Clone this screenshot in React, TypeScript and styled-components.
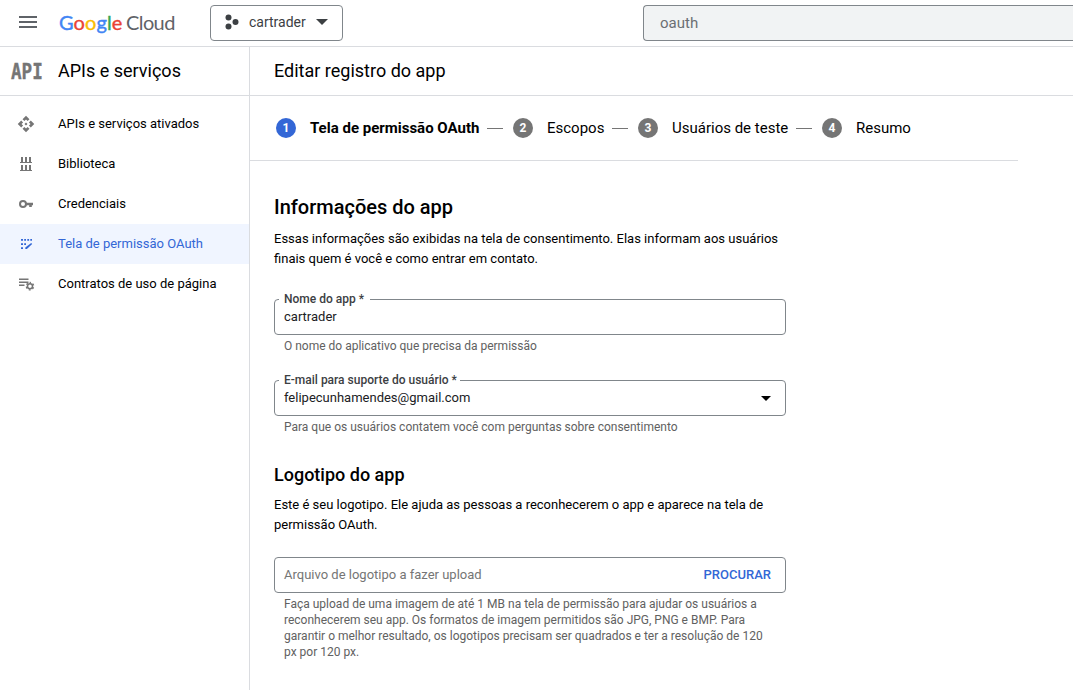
import React from "react";
import styled, { createGlobalStyle } from "styled-components";

const Global = createGlobalStyle`
  * { box-sizing: border-box; }
  html, body { margin: 0; background: #fff; }
  body { font-family: Roboto, "Liberation Sans", sans-serif; font-size: 13px; line-height: 20px; color: #000; overflow: hidden; }
  h1, h2, h3, p { margin: 0; font-weight: 400; }
  button { font-family: inherit; }
`;

const Page = styled.div`
  display: flex;
  flex-direction: column;
  height: 690px;
  overflow: hidden;
`;

const TopBar = styled.header`
  flex: none;
  display: flex;
  align-items: flex-start;
  height: 47px;
  padding: 5px 0 0 19px;
  border-bottom: 1px solid #dadce0;
`;

const MenuButton = styled.button`
  display: flex;
  margin: 11px 22px 0 0;
  padding: 0;
  border: 0;
  background: none;
`;

const Logo = styled.div`
  display: flex;
  width: 151px;
  margin-top: 5px;
  font: 400 20px/24px Lato, sans-serif;
  color: #5f6368;
  white-space: nowrap;
`;

const Wordmark = styled.span`
  width: 67px;
  letter-spacing: 0.1px;
  -webkit-text-stroke: 0.4px;
`;

const Letter = styled.span<{ $color: string }>`
  color: ${(p) => p.$color};
`;

const Product = styled.span`
  letter-spacing: -0.6px;
`;

const ProjectPicker = styled.button`
  display: flex;
  align-items: center;
  width: 133px;
  height: 36px;
  padding: 0 14px 2px 14px;
  border: 1px solid #80868b;
  border-radius: 4px;
  background: #fff;
  color: #3c4043;
  font-size: 14px;
`;

const ProjectName = styled.span`
  flex: 1;
  margin-left: 10px;
  text-align: left;
`;

const SearchBox = styled.div`
  flex: 1;
  height: 36px;
  margin-left: 300px;
  padding-left: 16px;
  border: 1px solid #80868b;
  border-right: 0;
  border-radius: 4px 0 0 4px;
  background: #f1f3f4;
  color: #6b6f73;
  font-size: 15px;
  line-height: 34px;
`;

const Body = styled.div`
  flex: 1;
  display: flex;
`;

const Sidebar = styled.nav`
  flex: none;
  width: 250px;
  border-right: 1px solid #dadce0;
`;

const SidebarTitle = styled.div`
  display: flex;
  align-items: center;
  height: 49px;
  padding-left: 11px;
  border-bottom: 1px solid #dadce0;
`;

const ApiMark = styled.span`
  width: 47px;
  padding-top: 1px;
  font: 700 22px/24px "DejaVu Sans Mono", monospace;
  color: #757575;
  -webkit-text-stroke: 0.4px;
  transform: scaleX(0.8);
  transform-origin: left;
`;

const Title = styled.h1`
  font-size: 18px;
  line-height: 24px;
`;

const NavList = styled.div`
  padding-top: 8px;
`;

const NavItem = styled.div<{ $active?: boolean }>`
  display: flex;
  align-items: center;
  gap: 23px;
  height: 40px;
  padding-left: 17px;
  background: ${(p) => (p.$active ? "#f0f5ff" : "transparent")};
  color: ${(p) => (p.$active ? "#3367d6" : "#000")};
`;

const Main = styled.main`
  flex: 1;
`;

const MainTitle = styled.div`
  display: flex;
  align-items: center;
  height: 49px;
  padding-left: 24px;
  border-bottom: 1px solid #dadce0;
`;

const Stepper = styled.div`
  display: flex;
  align-items: center;
  width: 768px;
  height: 65px;
  padding-left: 26px;
  border-bottom: 1px solid #dadce0;
  font-size: 15px;
`;

const StepNumber = styled.span<{ $active?: boolean }>`
  width: 20px;
  height: 20px;
  margin-right: 14px;
  border-radius: 50%;
  background: ${(p) => (p.$active ? "#3367d6" : "#757575")};
  color: #fff;
  font-size: 12px;
  font-weight: 700;
  text-align: center;
`;

const StepLabel = styled.span<{ $active?: boolean; $width: number }>`
  width: ${(p) => p.$width}px;
  font-weight: ${(p) => (p.$active ? 700 : 400)};
  white-space: nowrap;
`;

const StepDash = styled.span`
  width: 16px;
  height: 1px;
  margin: 0 10px 0 8px;
  background: #757575;
`;

const Form = styled.div`
  width: 536px;
  padding: 34px 0 0 24px;
`;

const Heading = styled.h2`
  font-size: 20px;
  font-weight: 500;
  line-height: 24px;
`;

const SubHeading = styled.h3`
  margin-top: 28px;
  font-size: 18px;
  font-weight: 500;
  line-height: 24px;
`;

const Text = styled.p<{ $top: number }>`
  margin-top: ${(p) => p.$top}px;
`;

const Field = styled.div<{ $top: number }>`
  position: relative;
  display: flex;
  align-items: center;
  justify-content: space-between;
  height: 36px;
  margin-top: ${(p) => p.$top}px;
  padding: 0 14px 0 9px;
  border: 1px solid #80868b;
  border-radius: 4px;
  color: #202124;
`;

const FieldLabel = styled.label<{ $gap: number }>`
  position: absolute;
  top: -9px;
  left: 4px;
  padding: 0 ${(p) => p.$gap}px 0 5px;
  background: #fff;
  font-size: 12px;
  font-weight: 500;
  line-height: 16px;
  color: #3c4043;
`;

const Placeholder = styled.span`
  color: #757575;
`;

const BrowseButton = styled.button`
  padding: 0 0 1px;
  border: 0;
  background: none;
  color: #3367d6;
  font-size: 13px;
  font-weight: 500;
`;

const Hint = styled.p`
  margin: 3px 10px 0;
  font-size: 12px;
  line-height: 16px;
  color: #616161;
`;

const navItems = [
  {
    label: "APIs e serviços ativados",
    icon: (
      <path
        transform="scale(0.75)"
        d="M14 12l-2 2-2-2 2-2 2 2zm-2-6l2.120 2.120 2.500-2.500L12 1 7.380 5.620l2.500 2.500L12 6zm-6 6l2.120-2.120-2.500-2.500L1 12l4.620 4.620 2.500-2.500L6 12zm12 0l-2.120 2.120 2.500 2.500L23 12l-4.620-4.620-2.500 2.500L18 12zm-6 6l-2.120-2.120-2.500 2.500L12 23l4.620-4.620-2.500-2.500L12 18z"
      />
    ),
  },
  {
    label: "Biblioteca",
    icon: <path d="M3 7h12v1H3zM4 2h2v5H4zM8 2h2v5H8zM12 2h2v5h-2zM3 15h12v1H3zM4 10h2v5H4zM8 10h2v5H8zM12 10h2v5h-2z" />,
  },
  {
    label: "Credenciais",
    icon: (
      <>
        <circle cx="6" cy="9" r="3" fill="none" stroke="#757575" strokeWidth="2" />
        <path d="M9 7.700h7v2.600h-1.200V12h-2.600v-1.700H9z" />
      </>
    ),
  },
  {
    label: "Tela de permissão OAuth",
    active: true,
    icon: (
      <>
        <path d="M4 4h2v1.700H4zM7.200 4H9v1.700H7.200zM10.300 4h1.800v1.700h-1.800zM13.300 4H15v1.700h-1.700zM4 8.200h2V10H4zM7.200 8.200H9V10H7.200zM4 12.300h2V14H4z" />
        <path d="M14.200 7.900l1 1-5.300 5.200H8.300v-1.500z" />
      </>
    ),
  },
  {
    label: "Contratos de uso de página",
    icon: (
      <>
        <path d="M2 3.500h9.500V5H2zM2 6.500h9.500V8H2zM2 9.500h5.500V11H2z" />
        <circle cx="13" cy="11.200" r="2.500" fill="none" stroke="#757575" strokeWidth="1.500" />
        <circle cx="13" cy="11.200" r="3.700" fill="none" stroke="#757575" strokeWidth="1.300" strokeDasharray="1.900 1.975" strokeDashoffset="0.950" transform="rotate(-90 13 11.200)" />
      </>
    ),
  },
];

const steps = [
  { label: "Tela de permissão OAuth", width: 169 },
  { label: "Escopos", width: 57 },
  { label: "Usuários de teste", width: 116 },
  { label: "Resumo", width: 55 },
];

const wordmark: [string, string][] = [
  ["G", "#4285f4"],
  ["o", "#ea4335"],
  ["o", "#fbbc04"],
  ["g", "#4285f4"],
  ["l", "#34a853"],
  ["e", "#ea4335"],
];

export default function App() {
  return (
    <Page>
      <Global />
      <TopBar>
        <MenuButton aria-label="Menu">
          <svg width="18" height="12" fill="#5f6368">
            <path d="M0 0h18v2H0zM0 5h18v2H0zM0 10h18v2H0z" />
          </svg>
        </MenuButton>
        <Logo>
          <Wordmark>
            {wordmark.map(([c, color], i) => (
              <Letter key={i} $color={color}>{c}</Letter>
            ))}
          </Wordmark>
          <Product>Cloud</Product>
        </Logo>
        <ProjectPicker>
          <svg width="14" height="16" fill="#3c4043">
            <circle cx="3.500" cy="3.500" r="3" />
            <circle cx="10.500" cy="8" r="3" />
            <circle cx="3.500" cy="12.500" r="3" />
          </svg>
          <ProjectName>cartrader</ProjectName>
          <svg width="12" height="6" fill="#3c4043">
            <path d="M0 0h12L6 6z" />
          </svg>
        </ProjectPicker>
        <SearchBox>oauth</SearchBox>
      </TopBar>
      <Body>
        <Sidebar>
          <SidebarTitle>
            <ApiMark>API</ApiMark>
            <Title>APIs e serviços</Title>
          </SidebarTitle>
          <NavList>
            {navItems.map((item) => (
              <NavItem key={item.label} $active={item.active}>
                <svg width="18" height="18" fill={item.active ? "#3367d6" : "#757575"}>{item.icon}</svg>
                <span>{item.label}</span>
              </NavItem>
            ))}
          </NavList>
        </Sidebar>
        <Main>
          <MainTitle>
            <Title>Editar registro do app</Title>
          </MainTitle>
          <Stepper>
            {steps.map((s, i) => (
              <React.Fragment key={s.label}>
                {i > 0 && <StepDash />}
                <StepNumber $active={i === 0}>{i + 1}</StepNumber>
                <StepLabel $active={i === 0} $width={s.width}>{s.label}</StepLabel>
              </React.Fragment>
            ))}
          </Stepper>
          <Form>
            <Heading>Informações do app</Heading>
            <Text $top={10}>
              Essas informações são exibidas na tela de consentimento. Elas informam aos usuários
              <br />
              finais quem é você e como entrar em contato.
            </Text>
            <Field $top={30}>
              <FieldLabel $gap={6}>Nome do app *</FieldLabel>
              <span>cartrader</span>
            </Field>
            <Hint>O nome do aplicativo que precisa da permissão</Hint>
            <Field $top={26}>
              <FieldLabel $gap={3}>E-mail para suporte do usuário *</FieldLabel>
              <span>felipecunhamendes@gmail.com</span>
              <svg width="10" height="5">
                <path d="M0 0h10L5 5z" />
              </svg>
            </Field>
            <Hint>Para que os usuários contatem você com perguntas sobre consentimento</Hint>
            <SubHeading>Logotipo do app</SubHeading>
            <Text $top={8}>
              Este é seu logotipo. Ele ajuda as pessoas a reconhecerem o app e aparece na tela de
              <br />
              permissão OAuth.
            </Text>
            <Field $top={22}>
              <Placeholder>Arquivo de logotipo a fazer upload</Placeholder>
              <BrowseButton>PROCURAR</BrowseButton>
            </Field>
            <Hint>
              Faça upload de uma imagem de até 1 MB na tela de permissão para ajudar os usuários a
              <br />
              reconhecerem seu app. Os formatos de imagem permitidos são JPG, PNG e BMP. Para
              <br />
              garantir o melhor resultado, os logotipos precisam ser quadrados e ter a resolução de 120
              <br />
              px por 120 px.
            </Hint>
          </Form>
        </Main>
      </Body>
    </Page>
  );
}
